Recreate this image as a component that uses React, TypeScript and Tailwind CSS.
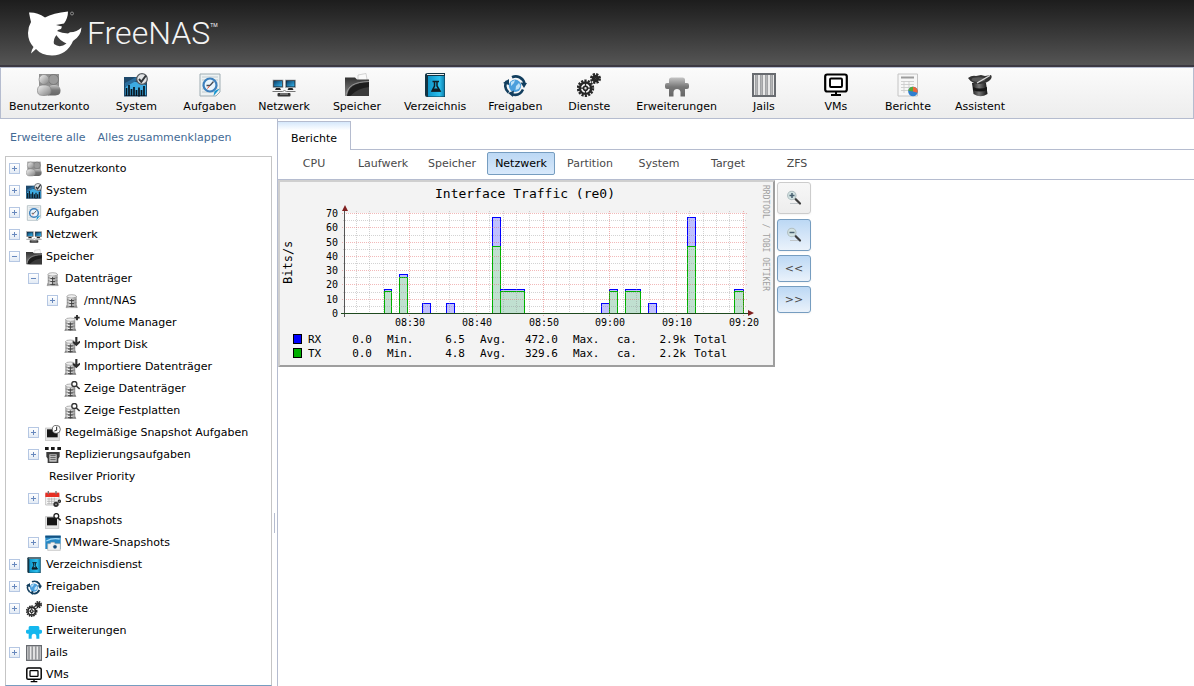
import React from 'react';

type IconProps = { className?: string };

const Svg = ({ className = '', children }: { className?: string; children: React.ReactNode }) => (
  <svg viewBox="0 0 24 24" className={`shrink-0 ${className}`} aria-hidden="true">
    {children}
  </svg>
);

const Gradients = () => (
  <svg width="0" height="0" className="absolute" aria-hidden="true">
    <defs>
      <linearGradient id="silver" x1="0" x2="1" y1="0" y2="1">
        <stop offset="0" stopColor="#f4f4f4" />
        <stop offset="1" stopColor="#808080" />
      </linearGradient>
      <linearGradient id="steel" x1="0" x2="0" y1="0" y2="1">
        <stop offset="0" stopColor="#c5c5c5" />
        <stop offset=".5" stopColor="#777777" />
        <stop offset="1" stopColor="#666666" />
      </linearGradient>
      <linearGradient id="azure" x1="0" x2="1" y1="0" y2="1">
        <stop offset="0" stopColor="#0d3f66" />
        <stop offset="1" stopColor="#35b4ee" />
      </linearGradient>
      <linearGradient id="cyan" x1="0" x2="1" y1="0" y2="0">
        <stop offset="0" stopColor="#0e94c8" />
        <stop offset="0.7" stopColor="#2cc0ee" />
        <stop offset="1" stopColor="#0e7eac" />
      </linearGradient>
      <linearGradient id="dark" x1="0" x2="0" y1="0" y2="1">
        <stop offset="0" stopColor="#333333" />
        <stop offset="1" stopColor="#8a8a8a" />
      </linearGradient>
      <linearGradient id="hat" x1="0" x2="1" y1="0" y2="0">
        <stop offset="0" stopColor="#1a1a1a" />
        <stop offset=".45" stopColor="#777777" />
        <stop offset="1" stopColor="#111111" />
      </linearGradient>
      <linearGradient id="disk" x1="0" x2="1" y1="0" y2="0">
        <stop offset="0" stopColor="#8c8c8c" />
        <stop offset="0.35" stopColor="#f5f5f5" />
        <stop offset="1" stopColor="#8c8c8c" />
      </linearGradient>
    </defs>
  </svg>
);

const UsersIcon = ({ className }: IconProps) => (
  <Svg className={className}>
    <path d="M2 1h20v13H2Z" fill="#8f8f8f" />
    <circle cx="16.500" cy="6.500" r="5" fill="#9b9b9b" stroke="#6f6f6f" strokeWidth=".7" />
    <path d="M11 22.500V16c0-3 3-4 6-4s6.500 1 6.500 5.500-3 5-6.500 5Z" fill="url(#steel)" />
    <circle cx="7" cy="6.500" r="5" fill="url(#silver)" stroke="#858585" strokeWidth=".7" />
    <path d="M.5 17.500C.5 13 3 12 7 12s7 1 7 5.500-3 5-7 5-6.500-.5-6.500-5Z" fill="url(#silver)" stroke="#858585" strokeWidth=".7" />
  </Svg>
);

const SystemIcon = ({ className }: IconProps) => (
  <Svg className={className}>
    <path d="M0 4h23v19.500H0Z" fill="#1f4a6c" />
    <path d="M1 15Q7 7 12 9l10 3v10H1Z" fill="#3dabe2" />
    <path d="M1 10 12 4v4L1 14Z" fill="#2b6d9c" />
    <path d="M2.500 15v8M5 12v11M7.500 16v7M10 14v9M12.500 17v6M15 14.500v9M17.500 17v6M20 13v10" stroke="#08131d" strokeWidth="1.700" />
    <circle cx="18" cy="6" r="5.300" fill="#e2e4e6" stroke="#565b60" strokeWidth="1.200" />
    <path d="m15 6 2.300 2.800L22 2.500" fill="none" stroke="#32363a" strokeWidth="2" />
  </Svg>
);

const TasksIcon = ({ className }: IconProps) => (
  <Svg className={className}>
    <path d="M2 1h20v18l-4 4H2Z" fill="#edf2f3" stroke="#9fadb3" />
    <path d="M4 4h16M4 7h16M4 10h16M4 13h16M4 16h16M4 19h12" stroke="#c1ccd1" />
    <circle cx="12" cy="12" r="6.500" fill="#eaf5fd" stroke="#3d80bd" strokeWidth="2.200" />
    <path d="M12 12.500 15.500 8.500M12 12.500H8.500" stroke="#434b55" strokeWidth="1.300" />
    <path d="m11.500 13-2 2.500" stroke="#e84525" />
    <path d="M22 15.500 15.500 23l1-5Z" fill="#1695cf" />
  </Svg>
);

const NetworkIcon = ({ className }: IconProps) => (
  <Svg className={className}>
    <rect x="1" y="7" width="10" height="7.500" fill="#192028" stroke="#a5abb0" strokeWidth=".7" />
    <rect x="2" y="8" width="8" height="5.500" fill="url(#azure)" />
    <rect x="13.500" y="7" width="10" height="7.500" fill="#192028" stroke="#a5abb0" strokeWidth=".7" />
    <rect x="14.500" y="8" width="8" height="5.500" fill="url(#azure)" />
    <path d="M4 15h4l1 2H3Zm12.500 0h4l1 2h-6Z" fill="#242424" />
    <path d="M.5 18.500h10l2-1 2 1h9" fill="none" stroke="#777777" />
    <rect x="5.500" y="20" width="13" height="3.500" rx="1" fill="#343434" />
    <path d="M8 21h8" stroke="#c9c9c9" strokeWidth=".8" />
  </Svg>
);

const StorageIcon = ({ className }: IconProps) => (
  <Svg className={className}>
    <path d="m13 2 8-1.500L22.500 9 13 10Z" fill="#fafafa" stroke="#c3c3c3" strokeWidth=".7" />
    <path d="M0 4.500h10l2 2h12V23H0Z" fill="url(#dark)" />
    <path d="M2 23C3 14 9 10 24 9v14Z" fill="#1d1d1d" />
    <path d="M5 23q8-8 19-9v9Z" fill="#3a3a3a" />
    <path d="M1.500 21C3 13 9 9 24 8.500" stroke="#a5a5a5" strokeWidth=".8" fill="none" />
  </Svg>
);

const BookIcon = ({ className }: IconProps) => (
  <Svg className={className}>
    <path d="M2 2q0-2 3-2h17v24H4q-2 0-2-2Z" fill="#123444" />
    <path d="M5 3h16.500v20.500H5Z" fill="url(#cyan)" />
    <path d="M4 1.500h17" stroke="#eeeeee" strokeWidth="1" />
    <path d="M9.500 8.500h6.500M11.500 9v4L9 18h8l-3-5V9" fill="none" stroke="#111d24" strokeWidth="1.500" />
    <path d="m10 15.500-1.500 3h9L16 15.500Z" fill="#111d24" />
  </Svg>
);

const ShareIcon = ({ className }: IconProps) => (
  <Svg className={className}>
    <circle cx="12" cy="12.800" r="6.200" fill="#4b9fdc" />
    <path d="m8 9 4-2-1 3-3 3Zm5 4 3-3 1.500 3-2 3-3 1Z" fill="#bfe2f8" />
    <path d="M9 4.200C14 2 20 4.500 21.500 10.500M20 16.500c-2.500 5-7 6-11 4.700M5.500 19.500C1.500 16 1.500 11 4 8" fill="none" stroke="#123e5e" strokeWidth="2.600" />
    <path d="m17.500 9.500 6.500.5-3 5ZM11 17.500l-1 6.500-5-4ZM0 10l6-4v6Z" fill="#123e5e" />
  </Svg>
);

const Gear = ({ cx, cy, r, hub }: { cx: number; cy: number; r: number; hub: number }) => (
  <g fill="none" stroke="#262626">
    <circle cx={cx} cy={cy} r={r} strokeWidth="2.400" strokeDasharray="2.200 1.200" />
    <circle cx={cx} cy={cy} r={r - 1.8} strokeWidth="2.400" />
    <circle cx={cx} cy={cy} r={hub} strokeWidth="1.600" fill="#dddddd" />
    <path
      d={`M${cx - r + 2} ${cy}h${r - 2 - hub}M${cx + hub} ${cy}h${r - 2 - hub}M${cx} ${cy - r + 2}v${r - 2 - hub}M${cx} ${cy + hub}v${r - 2 - hub}`}
      strokeWidth="1.300"
    />
  </g>
);

const GearsIcon = ({ className }: IconProps) => (
  <Svg className={className}>
    <Gear cx={8.500} cy={15.200} r={7.500} hub={2} />
    <Gear cx={18.500} cy={5.500} r={4.300} hub={1} />
  </Svg>
);

const pluginShape =
  'M4 10V6.500Q4 5 6 4.500h12q2 .5 2 2V10h2q2 0 2 2v2q0 2-2 2h-2v7.500h-4.500V19q-.5-3-3.500-3t-3.500 3v4.500H4V16H2q-2 0-2-2v-2q0-2 2-2Z';

const PluginIcon = ({ className }: IconProps) => (
  <Svg className={className}>
    <path d={pluginShape} fill="url(#steel)" />
  </Svg>
);

const PluginBlueIcon = ({ className }: IconProps) => (
  <Svg className={className}>
    <path d={pluginShape} fill="#14b7ee" />
  </Svg>
);

const JailIcon = ({ className }: IconProps) => (
  <Svg className={className}>
    <rect x="1" y="1" width="22" height="22" fill="#e9e9e9" stroke="#686b70" strokeWidth="2" />
    <path d="M4.500 2v20M9.500 2v20M14.500 2v20M19.500 2v20" stroke="#73767b" strokeWidth="2.200" />
    <path d="M4.500 2v20M9.500 2v20M14.500 2v20M19.500 2v20" stroke="#c5c5c5" strokeWidth=".8" />
  </Svg>
);

const VmIcon = ({ className }: IconProps) => (
  <Svg className={className}>
    <rect x="1.200" y="1.500" width="21.600" height="17" rx="2" fill="#ffffff" stroke="#000000" strokeWidth="2.200" />
    <rect x="6" y="5.500" width="12" height="8.500" rx="1" fill="#ffffff" stroke="#000000" strokeWidth="1.900" />
    <path d="M12 18v3.500M7 22h10" stroke="#000000" strokeWidth="2" />
  </Svg>
);

const ReportIcon = ({ className }: IconProps) => (
  <Svg className={className}>
    <path d="M2 1h19.500v22H2Z" fill="#f7f7f7" stroke="#c4c4c4" />
    <path d="M5 3.500h13v2H5Z" fill="#9c9c9c" />
    <path d="M5 8.500h13M5 11.500h13M5 14.500h13M5 17.500h13M8 8v12M13 8v12" stroke="#cccccc" strokeWidth=".9" />
    <circle cx="17" cy="18.500" r="4.800" fill="#2f7fd0" />
    <path d="M17 18.500v-4.800a4.800 4.800 0 0 0-4.700 4Z" fill="#58a83c" />
    <path d="M17 18.500v-4.800a4.800 4.800 0 0 1 4.600 6Z" fill="#ef6537" />
  </Svg>
);

const WizardIcon = ({ className }: IconProps) => (
  <Svg className={className}>
    <path d="M4 10h14l1.500 11q-7 4.500-14 0Z" fill="url(#hat)" />
    <path d="M0 5q4-3 8-2l5-1 4 1 6-1q2 3-2 6-4 3-9 3-8 0-12-6Z" fill="#333333" />
    <ellipse cx="10.500" cy="6.500" rx="7" ry="2.300" fill="#595959" />
    <path d="M9 10 22 2.500" stroke="#dddddd" strokeWidth="1.300" />
    <path d="M5 14q7 3 14 0v3q-7 3-14 0Z" fill="#161616" />
  </Svg>
);

const DiskBody = () => (
  <>
    <path d="M4.500 5v13L3 22h17l-1.500-4V5Z" fill="url(#disk)" stroke="#8a8a8a" strokeWidth=".7" />
    <ellipse cx="11.500" cy="5" rx="7" ry="2.500" fill="#efefef" stroke="#777777" strokeWidth=".8" />
    <path d="M4.500 10q7 3 14 0M4.500 14.500q7 3 14 0M3.500 19.500q8 3 16 0" fill="none" stroke="#777777" strokeWidth="1.100" />
    <path d="M11.500 9v12M8 11.500h7M8 16h7M8 20h7" stroke="#3e3e3e" strokeWidth="1.500" />
  </>
);

const DiskIcon = ({ className }: IconProps) => (
  <Svg className={className}>
    <DiskBody />
  </Svg>
);

const SmallDisk = ({ children, className = '' }: { children: React.ReactNode; className?: string }) => (
  <Svg className={className}>
    <g transform="translate(-2 2)">
      <DiskBody />
    </g>
    {children}
  </Svg>
);

const DiskAddIcon = ({ className }: IconProps) => (
  <SmallDisk className={className}>
    <path d="M19.500 0v8M15.500 4h8" stroke="#2c2c2c" strokeWidth="2.800" />
  </SmallDisk>
);

const DiskImportIcon = ({ className }: IconProps) => (
  <SmallDisk className={className}>
    <path d="M18.500 0v9" stroke="#2c2c2c" strokeWidth="3.200" />
    <path d="m13 5.500 5.500 3 5.500-3v3L18.500 14 13 8.500Z" fill="#2c2c2c" />
  </SmallDisk>
);

const DiskViewIcon = ({ className }: IconProps) => (
  <SmallDisk className={className}>
    <circle cx="15.500" cy="4.500" r="3.800" fill="#ffffff" stroke="#333333" strokeWidth="2" />
    <path d="m18.500 7.500 5 4.500" stroke="#333333" strokeWidth="2.500" />
  </SmallDisk>
);

const SnapshotTaskIcon = ({ className }: IconProps) => (
  <Svg className={className}>
    <path d="M.5 4.500h21v19H.5Z" fill="#e5e5e5" stroke="#b5b5b5" />
    <path d="M3 6.500h16v12H3Z" fill="#161616" />
    <circle cx="17" cy="6.500" r="6" fill="#ffffff" stroke="#555555" strokeWidth="1.300" />
    <path d="M17.500 2.500v5.500l-3.500 1" fill="none" stroke="#222222" strokeWidth="1.500" />
  </Svg>
);

const ReplicationIcon = ({ className }: IconProps) => (
  <Svg className={className}>
    <path d="M0 0h5.500v4.500H0Zm9 0h5.500v4.500H9Zm9.500 0H24v4.500h-5.500Z" fill="#171717" />
    <path d="M2 7.500h20v7l-2 3v6.500H4v-6.500l-2-3Z" fill="#3c3c3c" />
    <path d="M6.500 11h11v11h-11Z" fill="#cccccc" />
    <path d="M8 13h8M8 16h8M8 19h8" stroke="#444444" strokeWidth="1.300" />
  </Svg>
);

const ScrubIcon = ({ className }: IconProps) => (
  <Svg className={className}>
    <path d="M1 5h20v16H1Z" fill="#fafafa" stroke="#aaaaaa" />
    <path d="M.5 2.500h21V9H.5Z" fill="#e72f24" />
    <path d="M5 0v5M16.500 0v5" stroke="#767676" strokeWidth="2" />
    <path d="M3 12h16M3 15.500h16M3 19h10M6 10v10M10 10v10M14 10v7" stroke="#adadad" strokeWidth="1.100" />
    <circle cx="16.500" cy="20" r="2.700" fill="#999999" stroke="#2e2e2e" strokeWidth="2.600" />
    <circle cx="21.500" cy="15.500" r="1.700" fill="#999999" stroke="#2e2e2e" strokeWidth="1.800" />
  </Svg>
);

const SnapshotIcon = ({ className }: IconProps) => (
  <Svg className={className}>
    <path d="M.5 5.500h20v18H.5Z" fill="#e5e5e5" stroke="#b5b5b5" />
    <path d="M3 6.500h15v12H3Z" fill="#161616" />
    <circle cx="17" cy="4.500" r="3.600" fill="#ffffff" stroke="#222222" strokeWidth="2" />
    <path d="m19.500 7.500 4 3.500" stroke="#222222" strokeWidth="2.300" />
  </Svg>
);

const VmwareIcon = ({ className }: IconProps) => (
  <Svg className={className}>
    <path d="M.5 1h23v20H.5Z" fill="#2788c4" />
    <path d="M.5 1h23v3H.5Z" fill="#14507f" />
    <path d="M2 9q9-5 20-3" stroke="#a4daf8" strokeWidth="2" fill="none" />
    <path d="M4 13h4l1-2h5l1 2h8v10H4Z" fill="#f2f2f2" stroke="#a5a5a5" strokeWidth=".8" />
    <circle cx="15" cy="17.800" r="3.400" fill="#174c79" stroke="#ffffff" strokeWidth="1.200" />
  </Svg>
);

const MagnifierIcon = ({ plus }: { plus?: boolean }) => (
  <svg viewBox="0 0 16 16" className="size-4" aria-hidden="true">
    <path d="M4 13.500h8" stroke="#c0c6ca" strokeWidth="1" />
    <path d="m9.500 9 4.500 4.500" stroke="#3c3c3c" strokeWidth="2.200" strokeLinecap="round" />
    <circle cx="5.800" cy="5.500" r="4.200" fill="#d3e3e3" stroke="#b1bfc1" strokeWidth="1.100" />
    <path d={plus ? 'M3.500 5.500h5M6 3v5' : 'M3.500 5.500h5'} stroke="#486070" strokeWidth="1.500" />
  </svg>
);

const Logo = () => (
  <a href="#start" aria-label="FreeNAS" className="flex items-center gap-1 text-[#f4f4f4]">
    <svg viewBox="0 0 56 48" className="h-12 w-14" aria-hidden="true">
      <path
        d="M2 3.500Q10 3 18 8.500 26 4 41 2.500 41 9 37 14.500L29 16l6 1.500-1 2.500q-3 .5-4 2 5 2 11 2.500l2-1.200Q50 23 54.500 18.500 54 27 46 32 40 46 25 46.500 14 46 9 40l-5 4.500Q4.500 41 6.500 38 1 32 1 24q0-6 3-11Q3 9 2 3.500Z"
        fill="#ffffff"
      />
      <path d="M29.500 26Q26 30 27 35q6 4.500 12.500-.5Q32 31 29.500 26Z" fill="#404040" />
      <path d="M30 25q5 6 14 2.500" stroke="#ffffff" strokeWidth="2" fill="none" />
      <circle cx="45" cy="4.500" r="1.500" fill="none" stroke="#b0b0b0" strokeWidth=".7" />
    </svg>
    <span className="flex items-start font-['Roboto',sans-serif]">
      <span className="text-[32px] font-light leading-10">FreeNAS</span>
      <span className="mt-1.5 text-[5px] leading-3">TM</span>
    </span>
  </a>
);

const toolbar: { label: string; Icon: React.FC<IconProps> }[] = [
  { label: 'Benutzerkonto', Icon: UsersIcon },
  { label: 'System', Icon: SystemIcon },
  { label: 'Aufgaben', Icon: TasksIcon },
  { label: 'Netzwerk', Icon: NetworkIcon },
  { label: 'Speicher', Icon: StorageIcon },
  { label: 'Verzeichnis', Icon: BookIcon },
  { label: 'Freigaben', Icon: ShareIcon },
  { label: 'Dienste', Icon: GearsIcon },
  { label: 'Erweiterungen', Icon: PluginIcon },
  { label: 'Jails', Icon: JailIcon },
  { label: 'VMs', Icon: VmIcon },
  { label: 'Berichte', Icon: ReportIcon },
  { label: 'Assistent', Icon: WizardIcon },
];

type Row = { label: string; level: 0 | 1 | 2; state?: 'open' | 'closed'; Icon?: React.FC<IconProps> };

const tree: Row[] = [
  { label: 'Benutzerkonto', level: 0, state: 'closed', Icon: UsersIcon },
  { label: 'System', level: 0, state: 'closed', Icon: SystemIcon },
  { label: 'Aufgaben', level: 0, state: 'closed', Icon: TasksIcon },
  { label: 'Netzwerk', level: 0, state: 'closed', Icon: NetworkIcon },
  { label: 'Speicher', level: 0, state: 'open', Icon: StorageIcon },
  { label: 'Datenträger', level: 1, state: 'open', Icon: DiskIcon },
  { label: '/mnt/NAS', level: 2, state: 'closed', Icon: DiskIcon },
  { label: 'Volume Manager', level: 2, Icon: DiskAddIcon },
  { label: 'Import Disk', level: 2, Icon: DiskImportIcon },
  { label: 'Importiere Datenträger', level: 2, Icon: DiskImportIcon },
  { label: 'Zeige Datenträger', level: 2, Icon: DiskViewIcon },
  { label: 'Zeige Festplatten', level: 2, Icon: DiskViewIcon },
  { label: 'Regelmäßige Snapshot Aufgaben', level: 1, state: 'closed', Icon: SnapshotTaskIcon },
  { label: 'Replizierungsaufgaben', level: 1, state: 'closed', Icon: ReplicationIcon },
  { label: 'Resilver Priority', level: 1 },
  { label: 'Scrubs', level: 1, state: 'closed', Icon: ScrubIcon },
  { label: 'Snapshots', level: 1, Icon: SnapshotIcon },
  { label: 'VMware-Snapshots', level: 1, state: 'closed', Icon: VmwareIcon },
  { label: 'Verzeichnisdienst', level: 0, state: 'closed', Icon: BookIcon },
  { label: 'Freigaben', level: 0, state: 'closed', Icon: ShareIcon },
  { label: 'Dienste', level: 0, state: 'closed', Icon: GearsIcon },
  { label: 'Erweiterungen', level: 0, Icon: PluginBlueIcon },
  { label: 'Jails', level: 0, state: 'closed', Icon: JailIcon },
  { label: 'VMs', level: 0, Icon: VmIcon },
];

const indents = ['pl-[3px]', 'pl-[22px]', 'pl-[41px]'];

const TreeRow = ({ label, level, state, Icon }: Row) => (
  <li className={`flex h-[22px] items-center ${indents[level]}`}>
    {state ? (
      <button
        type="button"
        aria-label={`${label} ${state === 'open' ? 'zuklappen' : 'aufklappen'}`}
        className="flex size-[11px] shrink-0 items-center justify-center border border-[#b5c7e3] bg-linear-to-b from-white to-[#e3ebf5]"
      >
        <svg viewBox="0 0 5 5" className="size-[5px]" aria-hidden="true">
          <path d={state === 'closed' ? 'M0 2.500h5M2.500 0v5' : 'M0 2.500h5'} stroke="#6788bd" />
        </svg>
      </button>
    ) : (
      <span className="w-[11px] shrink-0" />
    )}
    <a href="#eintrag" className={`flex items-center gap-1 whitespace-nowrap pt-0.5 ${Icon ? 'pl-1.5' : 'pl-2.5'}`}>
      {Icon && <Icon className="size-4" />}
      {label}
    </a>
  </li>
);

const reports = ['CPU', 'Laufwerk', 'Speicher', 'Netzwerk', 'Partition', 'System', 'Target', 'ZFS'];

const bars: { from: number; to: number; rx: number; tx?: number }[] = [
  { from: 106, to: 114, rx: 109, tx: 111 },
  { from: 121, to: 130, rx: 94, tx: 97 },
  { from: 144, to: 153, rx: 123 },
  { from: 168, to: 177, rx: 123 },
  { from: 214, to: 223, rx: 37, tx: 66 },
  { from: 222, to: 247, rx: 109, tx: 111 },
  { from: 323, to: 332, rx: 123 },
  { from: 331, to: 340, rx: 109, tx: 111 },
  { from: 347, to: 363, rx: 109, tx: 111 },
  { from: 370, to: 379, rx: 123 },
  { from: 409, to: 418, rx: 37, tx: 66 },
  { from: 456, to: 466, rx: 109, tx: 111 },
];

const yTicks = [133, 119, 104, 90, 76, 62, 47, 33];
const yMinor = [126, 112, 97, 83, 69, 55, 40];
const times = ['08:30', '08:40', '08:50', '09:00', '09:10', '09:20'];
const xMajor = [131, 198, 265, 331, 398, 465];
const xMinor = [78, 91, 105, 118, 145, 158, 171, 185, 211, 225, 238, 251, 278, 291, 305, 318, 345, 358, 371, 385, 411, 425, 438, 451];

const legend = [
  { name: 'RX', color: '#0000ff', y: 163, min: '0.0', avg: '6.5', max: '472.0', total: '2.9k' },
  { name: 'TX', color: '#00b000', y: 177, min: '0.0', avg: '4.8', max: '329.6', total: '2.2k' },
];

const TrafficChart = () => (
  <svg
    width="497"
    height="187"
    viewBox="0 0 497 187"
    role="img"
    aria-label="Interface Traffic (re0)"
    className="shrink-0 font-['DejaVu_Sans_Mono',monospace]"
  >
    <rect width="497" height="187" fill="#f3f3f3" />
    <path d="M0 0h497l-2 2H2v183l-2 2Z" fill="#cfcfcf" />
    <path d="M497 187H0l2-2h493V2l2-2Z" fill="#9e9e9e" />
    <text x="247" y="18" textAnchor="middle" fontSize="13">
      Interface Traffic (re0)
    </text>
    <rect x="67" y="33" width="400" height="100" fill="#ffffff" />

    <g shapeRendering="crispEdges" fill="none">
      {bars.map((b) => (
        <g key={b.from}>
          <rect x={b.from} y={b.rx} width={b.to - b.from} height={133 - b.rx} fill="#c0c0ff" />
          <path d={`M${b.from + 0.5} 133V${b.rx + 0.5}H${b.to - 0.5}V133`} stroke="#0000ff" />
          {b.tx && (
            <>
              <rect x={b.from} y={b.tx} width={b.to - b.from} height={133 - b.tx} fill="#c0e0d0" />
              <path d={`M${b.from + 0.5} 133V${b.tx + 0.5}H${b.to - 0.5}V133`} stroke="#00b000" />
            </>
          )}
        </g>
      ))}
      {yMinor.map((y) => (
        <path key={y} d={`M65 ${y + 0.5}h404`} stroke="#909090" strokeOpacity=".4" strokeDasharray="1 1" />
      ))}
      {xMinor.map((x) => (
        <path key={x} d={`M${x + 0.5} 31v104`} stroke="#909090" strokeOpacity=".4" strokeDasharray="1 1" />
      ))}
      {yTicks.map((y) => (
        <path key={y} d={`M64 ${y + 0.5}h405`} stroke="#de5050" strokeOpacity=".4" strokeDasharray="1 1" />
      ))}
      {xMajor.map((x) => (
        <path key={x} d={`M${x + 0.5} 31v105`} stroke="#de5050" strokeOpacity=".45" strokeDasharray="1 1" />
      ))}
      <path d="M66.500 30v107" stroke="#555555" />
      <path d="M63 133.500h407" stroke="#1f4a1f" />
    </g>
    <path d="m64 31 3-6 3 6ZM470 130l6 3-6 3Z" fill="#802020" />

    <g fontSize="10">
      {yTicks.map((y, i) => (
        <text key={y} x="60" y={y + 4} textAnchor="end">
          {i * 10}
        </text>
      ))}
      {times.map((t, i) => (
        <text key={t} x={xMajor[i] + 1} y="146" textAnchor="middle">
          {t}
        </text>
      ))}
    </g>
    <text transform="translate(14 104) rotate(-90)" fontSize="12">
      Bits/s
    </text>
    <text transform="translate(485 5) rotate(90)" fontSize="8" fill="#a0a0a0">
      RRDTOOL / TOBI OETIKER
    </text>
    {legend.map((l) => (
      <g key={l.name} fontSize="11">
        <rect x="15.500" y={l.y - 8.5} width="8" height="9" fill={l.color} stroke="#000000" />
        <text x="30" y={l.y}>{l.name}</text>
        <text x="94" y={l.y} textAnchor="end">{l.min}</text>
        <text x="109" y={l.y}>Min.</text>
        <text x="187" y={l.y} textAnchor="end">{l.avg}</text>
        <text x="202" y={l.y}>Avg.</text>
        <text x="280" y={l.y} textAnchor="end">{l.max}</text>
        <text x="295" y={l.y}>Max.</text>
        <text x="339" y={l.y}>ca.</text>
        <text x="408" y={l.y} textAnchor="end">{l.total}</text>
        <text x="416" y={l.y}>Total</text>
      </g>
    ))}
  </svg>
);

const controlBase = 'flex w-[34px] items-center justify-center rounded-[3px] border shadow-xs';
const controlBlue = 'border-[#769dc0] bg-linear-to-b from-[#bcd8f4] to-[#eaf2fb]';

export default function App() {
  return (
    <div className="flex min-h-screen flex-col bg-white font-['Verdana','DejaVu_Sans',sans-serif] text-[11px] leading-4 text-black">
      <Gradients />
      <header className="flex h-[67px] items-center border-b-2 border-[#3b3841] bg-linear-to-b from-[#1d1d1d] to-[#555555] pl-[27px]">
        <Logo />
      </header>

      <nav
        aria-label="Hauptmenü"
        className="h-[52px] shrink-0 border border-[#b5bccf] bg-linear-to-b from-[#fbfbfb] to-[#ededed]"
      >
        <div className="-ml-[3px] flex">
          {toolbar.map(({ label, Icon }) => (
            <button key={label} type="button" className="flex min-w-[72px] flex-col items-center px-[11px] pt-[5px]">
              <Icon className="size-6" />
              <span className="pt-0.5">{label}</span>
            </button>
          ))}
        </div>
      </nav>

      <div className="flex flex-1 items-stretch">
        <aside className="flex w-[277px] shrink-0 items-stretch">
          <div className="flex-1 pl-[5px]">
            <div className="flex h-[37px] items-center gap-3 pl-[5px] text-[#436a94]">
              <a href="#erweitern">Erweitere alle</a>
              <a href="#zuklappen">Alles zusammenklappen</a>
            </div>
            <ul className="border border-b-[#769dc0] border-t-[#c5c5c5] border-x-[#c5c5c5]">
              {tree.map((row) => (
                <TreeRow key={`${row.level}-${row.label}`} {...row} />
              ))}
            </ul>
          </div>
          <div className="flex w-[5px] items-center justify-center pt-60" role="separator">
            <span className="h-5 w-px bg-[#b5bccf]" />
          </div>
        </aside>

        <main className="min-w-0 flex-1 border-l border-[#b5bccf] pt-0.5">
          <div className="flex h-[29px]" role="tablist">
            <button
              type="button"
              role="tab"
              aria-selected="true"
              className="w-[73px] border-r border-t border-[#b5bccf] bg-linear-to-b from-[#d6e8fb] to-white to-30% pt-1.5"
            >
              Berichte
            </button>
            <span className="flex-1 border-b border-[#b5bccf]" />
          </div>
          <div className="flex h-[30px] items-start gap-px border-b border-[#b5bccf] pl-0.5 pt-0.5" role="tablist">
            {reports.map((name) => (
              <button
                key={name}
                type="button"
                role="tab"
                aria-selected={name === 'Netzwerk'}
                className={
                  name === 'Netzwerk'
                    ? 'h-[23px] w-[68px] rounded-xs border border-[#769dc0] bg-linear-to-b from-[#bcd8f4] to-[#d8e9fb]'
                    : 'h-[23px] w-[68px] text-[#494949]'
                }
              >
                {name}
              </button>
            ))}
          </div>
          <div className="flex items-start gap-0.5">
            <TrafficChart />
            <div className="flex flex-col gap-1 pt-0.5">
              <button type="button" aria-label="Vergrößern" className={`${controlBase} mb-px h-8 border-[#cccccc] bg-linear-to-b from-[#f7f7f7] to-[#ededed]`}>
                <MagnifierIcon plus />
              </button>
              <button type="button" aria-label="Verkleinern" className={`${controlBase} ${controlBlue} h-8`}>
                <MagnifierIcon />
              </button>
              <button type="button" className={`${controlBase} ${controlBlue} h-[27px] text-[#494949]`}>
                &lt;&lt;
              </button>
              <button type="button" className={`${controlBase} ${controlBlue} h-[27px] text-[#494949]`}>
                &gt;&gt;
              </button>
            </div>
          </div>
        </main>
      </div>
    </div>
  );
}
